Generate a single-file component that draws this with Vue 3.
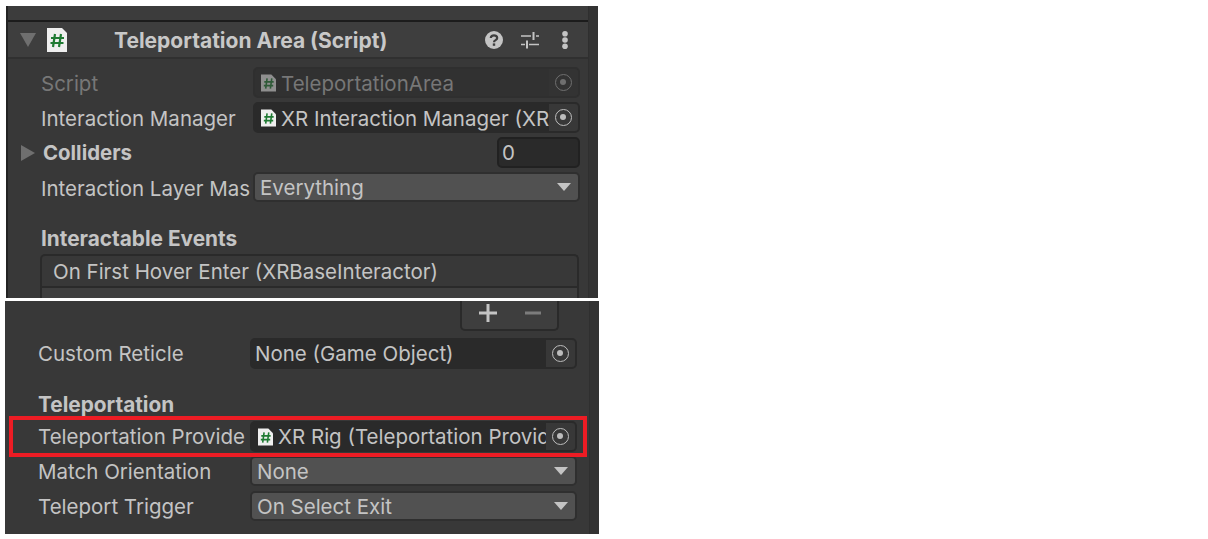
<template>
  <div class="page">
    <section class="panel panel-top">
      <div class="inspector">
        <div class="top-strip"></div>
        <header class="comp-header">
          <span class="tri tri-down"></span>
          <svg class="doc-big" viewBox="0 0 20 24">
            <path d="M0 0H15L20 5V24H0Z" fill="#efefef" />
            <path d="M8 6L6 19M14 6L12 19M4 10H17M3.5 15H16.5" stroke="#1f7a33" stroke-width="2.2" fill="none" />
          </svg>
          <span class="comp-title">Teleportation Area (Script)</span>
          <svg class="hdr-icon" width="18" height="18" viewBox="0 0 18 18">
            <circle cx="9" cy="9" r="9" fill="#c4c4c4" />
            <path d="M5.8 7C5.8 3.4 12.2 3.4 12.2 7C12.2 9.4 9 8.8 9 11.2" stroke="#3e3e3e" stroke-width="2.2" fill="none" />
            <rect x="7.8" y="12.4" width="2.4" height="2.4" fill="#3e3e3e" />
          </svg>
          <svg class="hdr-icon sliders" width="18" height="18" viewBox="0 0 18 18">
            <path d="M0 5H10M15 5H18M0 13.5H4M8 13.5H18" stroke="#c4c4c4" stroke-width="1.6" />
            <path d="M12.5 1V9M6 9.5V17.5" stroke="#c4c4c4" stroke-width="2" />
          </svg>
          <svg class="hdr-icon" width="8" height="18" viewBox="0 0 8 18">
            <circle cx="4" cy="2.8" r="2.8" fill="#c4c4c4" />
            <circle cx="4" cy="9" r="2.8" fill="#c4c4c4" />
            <circle cx="4" cy="15.2" r="2.8" fill="#c4c4c4" />
          </svg>
        </header>
        <div class="body">
          <div class="row dim">
            <label>Script</label>
            <div class="field object disabled">
              <svg class="doc" viewBox="0 0 16 18">
                <path d="M0 0H11L16 5V18H0Z" fill="#8f8f8f" />
                <path d="M6.5 4L5 15M11.5 4L10 15M3.5 7.8H13.5M3 11.8H13" stroke="#2f5a38" stroke-width="1.7" fill="none" />
              </svg>
              <span class="value">TeleportationArea</span>
              <span class="picker"><span class="target"></span></span>
            </div>
          </div>
          <div class="row">
            <label>Interaction Manager</label>
            <div class="field object">
              <svg class="doc" viewBox="0 0 16 18">
                <path d="M0 0H11L16 5V18H0Z" fill="#efefef" />
                <path d="M6.5 4L5 15M11.5 4L10 15M3.5 7.8H13.5M3 11.8H13" stroke="#1f7a33" stroke-width="1.7" fill="none" />
              </svg>
              <span class="value">XR Interaction Manager (XRInteractionManager)</span>
              <span class="picker"><span class="target"></span></span>
            </div>
          </div>
          <div class="row row-colliders">
            <div class="foldout">
              <span class="tri tri-right"></span>
              <strong>Colliders</strong>
            </div>
            <div class="field number">0</div>
          </div>
          <div class="row">
            <label>Interaction Layer Mask</label>
            <div class="field select">
              <span class="value">Everything</span>
              <span class="caret"></span>
            </div>
          </div>
          <h4 class="section section-events">Interactable Events</h4>
          <div class="event-box">
            <div class="event-head">On First Hover Enter (XRBaseInteractor)</div>
            <div class="event-body"></div>
          </div>
        </div>
      </div>
      <div class="scrollbar"></div>
    </section>

    <section class="panel panel-bottom">
      <div class="inspector">
        <div class="footer-wrap">
          <div class="plus-minus">
            <svg width="18" height="18" viewBox="0 0 18 18"><path d="M9 0V18M0 9H18" stroke="#c4c4c4" stroke-width="3" /></svg>
            <svg width="16" height="18" viewBox="0 0 16 18"><path d="M0 9H16" stroke="#7c7c7c" stroke-width="3" /></svg>
          </div>
        </div>
        <div class="body body-bottom">
          <div class="row">
            <label>Custom Reticle</label>
            <div class="field object">
              <span class="value no-icon">None (Game Object)</span>
              <span class="picker"><span class="target"></span></span>
            </div>
          </div>
          <h4 class="section section-tele">Teleportation</h4>
          <div class="row highlighted">
            <label>Teleportation Provider</label>
            <div class="field object">
              <svg class="doc" viewBox="0 0 16 18">
                <path d="M0 0H11L16 5V18H0Z" fill="#efefef" />
                <path d="M6.5 4L5 15M11.5 4L10 15M3.5 7.8H13.5M3 11.8H13" stroke="#1f7a33" stroke-width="1.7" fill="none" />
              </svg>
              <span class="value">XR Rig (Teleportation Provider)</span>
              <span class="picker"><span class="target"></span></span>
            </div>
            <span class="red-box"></span>
          </div>
          <div class="row">
            <label>Match Orientation</label>
            <div class="field select">
              <span class="value">None</span>
              <span class="caret"></span>
            </div>
          </div>
          <div class="row">
            <label>Teleport Trigger</label>
            <div class="field select">
              <span class="value">On Select Exit</span>
              <span class="caret"></span>
            </div>
          </div>
        </div>
      </div>
      <div class="scrollbar"></div>
    </section>
  </div>
</template>

<script setup>
</script>

<style>
html, body {
  background: #fff;
}
</style>

<style scoped>
.page {
  width: 1208px;
  height: 539px;
  overflow: hidden;
  display: flex;
  flex-direction: column;
  gap: 3px;
  padding-top: 6px;
  box-sizing: border-box;
  font-family: Inter, "Liberation Sans", sans-serif;
  font-size: 20.5px;
  color: #c4c4c4;
}

.panel {
  display: flex;
  background: #383838;
  overflow: hidden;
}

.panel-top {
  width: 592px;
  height: 292px;
  margin-left: 6px;
  border-left: 2px solid #232323;
  box-sizing: border-box;
}

.panel-bottom {
  width: 594px;
  height: 233px;
  margin-left: 5px;
}

.inspector {
  flex: 1;
  min-width: 0;
}

.scrollbar {
  width: 9px;
  background: #333;
  border-left: 1px solid #2f2f2f;
}

.top-strip {
  height: 14px;
  background: #3c3c3c;
  border-bottom: 2px solid #1c1c1c;
}

.comp-header {
  height: 35px;
  display: flex;
  align-items: center;
  background: #3e3e3e;
  border-bottom: 2px solid #303030;
}

.comp-header .tri-down {
  margin-left: 12px;
}

.doc-big {
  width: 20px;
  height: 24px;
  margin-left: 11px;
  flex: none;
}

.comp-title {
  margin-left: 47px;
  padding-top: 1px;
  font-size: 21px;
  font-weight: 700;
  color: #c8c8c8;
  flex: 1;
  white-space: nowrap;
}

.hdr-icon {
  flex: none;
}

.sliders {
  margin: 0 22px 0 18px;
}

.comp-header .hdr-icon:last-child {
  margin-right: 19px;
}

.tri {
  display: block;
  width: 0;
  height: 0;
  flex: none;
}

.tri-down {
  border-left: 8px solid transparent;
  border-right: 8px solid transparent;
  border-top: 14px solid #6f6f6f;
}

.tri-right {
  border-top: 8px solid transparent;
  border-bottom: 8px solid transparent;
  border-left: 14px solid #6f6f6f;
}

.body {
  padding: 8px 8px 0 33px;
}

.row {
  position: relative;
  display: flex;
  align-items: center;
  justify-content: space-between;
  height: 31px;
  margin-bottom: 4px;
}

.row label {
  width: 210px;
  flex: none;
  overflow: hidden;
  white-space: nowrap;
}

.body-bottom .row label {
  width: 208px;
}

.panel-top .row label,
.panel-top .object .value {
  padding-top: 1px;
}

.dim label {
  color: #777;
}

.foldout {
  display: flex;
  align-items: center;
  margin-left: -20px;
}

.foldout strong {
  margin-left: 8px;
  font-size: 20.4px;
  font-weight: 700;
}

.field {
  box-sizing: border-box;
  height: 31px;
  border: 2px solid #2a2a2a;
  border-radius: 5px;
  display: flex;
  align-items: center;
  overflow: hidden;
  white-space: nowrap;
}

.object {
  width: 327px;
  background: #2a2a2a;
}

.object .doc {
  width: 15px;
  height: 18px;
  margin-left: 6px;
  flex: none;
}

.object .value {
  flex: 1;
  min-width: 0;
  overflow: hidden;
  margin-left: 5px;
}

.object .no-icon {
  margin-left: 3px;
}

.disabled {
  background: #313131;
  border-color: #2f2f2f;
  color: #777;
}

.picker {
  width: 29px;
  height: 100%;
  flex: none;
  background: #383838;
  display: flex;
  align-items: center;
  justify-content: center;
}

.disabled .picker {
  background: #333;
}

.target {
  box-sizing: border-box;
  width: 17px;
  height: 17px;
  border-radius: 50%;
  border: 1.5px solid #bdbdbd;
  position: relative;
}

.target::after {
  content: "";
  position: absolute;
  left: 4px;
  top: 4px;
  width: 6px;
  height: 6px;
  border-radius: 50%;
  background: #bdbdbd;
}

.disabled .target {
  border-color: #6f6f6f;
}

.disabled .target::after {
  background: #6f6f6f;
}

.number {
  width: 83px;
  background: #2a2a2a;
  border-color: #212121;
  padding-left: 3px;
}

.select {
  width: 327px;
  height: 30px;
  align-self: flex-start;
  background: #515151;
  border-color: #2f2f2f;
  justify-content: space-between;
  padding: 0 7px 0 5px;
}

.caret {
  width: 0;
  height: 0;
  border-left: 7px solid transparent;
  border-right: 7px solid transparent;
  border-top: 8px solid #c4c4c4;
}

.section {
  margin: 0;
  font-size: 20.8px;
  font-weight: 700;
  line-height: 26px;
}

.section-events {
  padding-top: 19px;
}

.event-box {
  margin: 2px 1px 0 -1px;
  border: 2px solid #2a2a2a;
  border-bottom: 0;
  border-radius: 5px 5px 0 0;
  height: 60px;
}

.event-head {
  height: 30px;
  line-height: 31px;
  padding-left: 11px;
  border-bottom: 2px solid #2a2a2a;
}

.event-body {
  height: 26px;
  background: #3f3f3f;
}

.footer-wrap {
  height: 30px;
  display: flex;
  justify-content: flex-end;
  padding-right: 30px;
}

.plus-minus {
  box-sizing: border-box;
  width: 99px;
  height: 30px;
  padding-bottom: 4px;
  background: #3e3e3e;
  border: 2px solid #2a2a2a;
  border-top: 0;
  border-radius: 0 0 5px 5px;
  display: flex;
  align-items: center;
  justify-content: center;
  gap: 28px;
}

.body-bottom {
  padding: 7px 12px 0 33px;
}

.section-tele {
  padding-top: 19px;
  margin-bottom: 3px;
}

.red-box {
  position: absolute;
  left: -29px;
  right: -10px;
  top: -5px;
  bottom: -5px;
  border: 4px solid #ed1c24;
}

.highlighted {
  z-index: 1;
}
</style>
